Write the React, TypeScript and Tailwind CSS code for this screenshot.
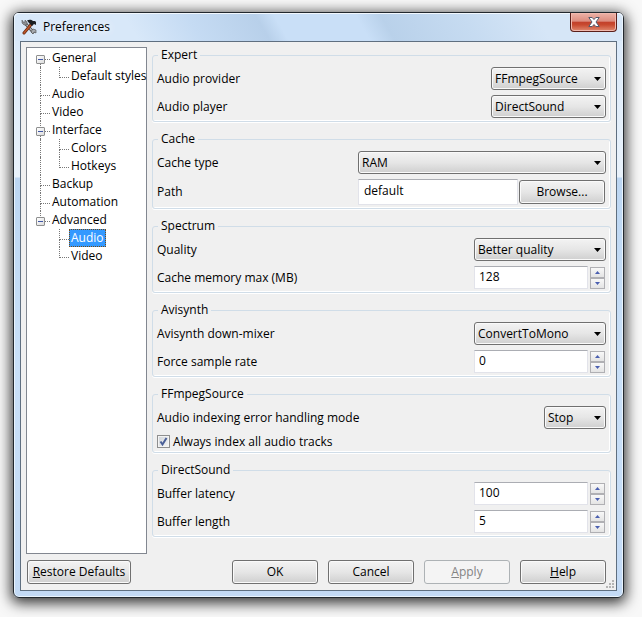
import React, { useState } from 'react';
import type { ReactNode } from 'react';

const tree = [
  { label: 'General', children: ['Default styles'] },
  { label: 'Audio', children: [] },
  { label: 'Video', children: [] },
  { label: 'Interface', children: ['Colors', 'Hotkeys'] },
  { label: 'Backup', children: [] },
  { label: 'Automation', children: [] },
  { label: 'Advanced', children: ['Audio', 'Video'] },
];

const face = 'bg-linear-to-b from-[#f3f3f3] from-0% via-[#e6e6e6] via-50% to-[#cfcfcf]';

// Dotted connector on the left of a tree label
function Branch({ up = true, down = true, toggle = false }: { up?: boolean; down?: boolean; toggle?: boolean }) {
  return (
    <span className="relative flex w-[10px] shrink-0 flex-col">
      <span className={`h-[11px] border-b border-dotted border-[#777] ${up ? 'border-l' : ''}`} />
      <span className={`h-[7px] border-dotted border-[#777] ${down ? 'border-l' : ''}`} />
      {toggle && (
        <span className="absolute top-[6px] -left-1 flex h-[9px] w-[9px] items-center justify-center rounded-[1px] border border-[#8e8f8f] bg-linear-to-br from-white to-[#dcdcdc]">
          <span className="h-px w-[5px] bg-[#3f56a6]" />
        </span>
      )}
    </span>
  );
}

function TreeLabel({ label, id, selected, onSelect }: { label: string; id: string; selected: string; onSelect: (id: string) => void }) {
  return (
    <button
      type="button"
      onClick={() => onSelect(id)}
      className={`h-[18px] px-px leading-4 whitespace-nowrap border ${
        selected === id ? 'border-dotted border-[#7a4a10] bg-[#3399ff] text-white' : 'border-transparent'
      }`}
    >
      {label}
    </button>
  );
}

function Tree() {
  const [selected, setSelected] = useState('Advanced/Audio');

  return (
    <nav className="w-[121px] shrink-0 border border-[#828790] bg-white py-px pl-[13px]">
      <ul>
        {tree.map((node, i) => {
          const last = i === tree.length - 1;
          return (
            <li key={node.label}>
              <div className="flex h-[18px]">
                <Branch up={i > 0} down={!last} toggle={node.children.length > 0} />
                <TreeLabel label={node.label} id={node.label} selected={selected} onSelect={setSelected} />
              </div>
              {node.children.map((child, j) => (
                <div key={child} className="flex h-[18px]">
                  <span className={`w-[19px] shrink-0 border-dotted border-[#777] ${last ? '' : 'border-l'}`} />
                  <Branch down={j < node.children.length - 1} />
                  <TreeLabel label={child} id={`${node.label}/${child}`} selected={selected} onSelect={setSelected} />
                </div>
              ))}
            </li>
          );
        })}
      </ul>
    </nav>
  );
}

function Group({ title, children }: { title: string; children: ReactNode }) {
  return (
    <fieldset className="min-w-0 rounded-[3px] border border-[#d0dde8] pr-1 pb-[3px] pl-1 shadow-[inset_-1px_-1px_0_#fff,0_1px_0_#fff]">
      <legend className="ml-px h-4 px-[3px] leading-4">{title}</legend>
      <div className="flex flex-col gap-[5px] pt-1">{children}</div>
    </fieldset>
  );
}

function Row({ label, id, children }: { label: string; id: string; children: ReactNode }) {
  return (
    <div className="flex items-center justify-between">
      <label htmlFor={id}>{label}</label>
      {children}
    </div>
  );
}

function Select({ id, value, width }: { id: string; value: string; width: string }) {
  return (
    <span className={`relative flex ${width}`}>
      <select
        id={id}
        defaultValue={value}
        className={`h-[23px] w-full appearance-none rounded-[3px] border border-[#707070] pl-[3px] shadow-[inset_0_0_0_1px_#fafafa] ${face}`}
      >
        <option>{value}</option>
      </select>
      <svg className="pointer-events-none absolute top-[10px] right-[5px]" width="7" height="4" viewBox="0 0 7 4">
        <path d="M0 0h7L3.500 4z" fill="#000" />
      </svg>
    </span>
  );
}

function Spin({ id, value }: { id: string; value: number }) {
  const [n, setN] = useState(value);
  const button =
    'flex h-[11px] w-[15px] items-center justify-center border border-[#b0b0b4] bg-linear-to-b from-[#f8f8f8] to-[#e4e4e4]';

  return (
    <span className="flex items-center gap-[2px]">
      <input
        id={id}
        value={n}
        onChange={(e) => setN(Number(e.target.value) || 0)}
        className="h-[23px] w-[114px] border border-[#e2e3ea] border-t-[#abadb3] bg-white pb-[2px] pl-1"
      />
      <span className="mr-px flex flex-col">
        <button type="button" aria-label="Increase" onClick={() => setN(n + 1)} className={button}>
          <svg width="5" height="3" viewBox="0 0 5 3"><path d="M0 3L2.500 0L5 3z" fill="#4a5fb0" /></svg>
        </button>
        <button type="button" aria-label="Decrease" onClick={() => setN(n - 1)} className={button}>
          <svg width="5" height="3" viewBox="0 0 5 3"><path d="M0 0h5L2.500 3z" fill="#4a5fb0" /></svg>
        </button>
      </span>
    </span>
  );
}

function Button({ children, className = 'w-[86px]', disabled = false }: { children: ReactNode; className?: string; disabled?: boolean }) {
  return (
    <button
      type="button"
      disabled={disabled}
      className={`h-6 rounded-[3px] border ${className} ${
        disabled ? 'border-[#adb2b5] bg-[#f4f4f4] text-[#838383]' : `border-[#707070] shadow-[inset_0_0_0_1px_#fafafa] ${face}`
      }`}
    >
      {children}
    </button>
  );
}

function TitleBar() {
  return (
    <header className="-mx-[6px] flex h-7 items-start justify-between rounded-t-[5px] bg-[linear-gradient(60deg,#d8e8f9_0%,#d8e8f9_20%,#c5dbf3_30%,#b8d0ea_41%,#c9dff7_44%,#c9dff7_57%,#b9d1ea_61%,#c6dbf1_74%,#d6e6f7_86%)] px-[6px] shadow-[inset_0_1px_0_#f2f8fe,inset_1px_0_0_#eaf4fd,inset_-1px_0_0_#eaf4fd]">
      <div className="flex h-7 items-center gap-[6px] pl-px">
        <svg width="16" height="16" viewBox="0 0 16 16">
          <path d="M4 4L13 14" stroke="#444" strokeWidth="3" />
          <path d="M4 4L13 14" stroke="#b9bcc0" strokeWidth="1.500" />
          <path d="M1 1v3l2 2h3V3L4 1v2H2z" fill="#8d9094" stroke="#444" strokeWidth=".5" />
          <path d="M11 11l1-1 3 1v3l-2-1-1 2-2-2z" fill="#a8abaf" stroke="#444" strokeWidth=".6" />
          <path d="M10.500 5L3 14" stroke="#6b2c10" strokeWidth="3" strokeLinecap="round" />
          <path d="M10.500 5L3 14" stroke="#c0562a" strokeWidth="1.400" strokeLinecap="round" />
          <path d="M6 1.500C8 .3 10.500.5 12 2h2l1 1v3l-2-1-2 2-3-3z" fill="#1c1f22" />
        </svg>
        <h1 className="[text-shadow:0_0_8px_#fff,0_0_12px_#fff]">Preferences</h1>
      </div>
      <button
        type="button"
        aria-label="Close"
        className="flex h-[19px] w-[47px] items-center justify-center rounded-b-[4px] border border-t-0 border-[#5a1f1a] bg-[linear-gradient(#eeb3a8_0%,#dc8c7e_46%,#c2402b_50%,#c8492f_65%,#e08a70_100%)] shadow-[inset_0_0_0_1px_#f0b9ae]"
      >
        <svg width="12" height="10" viewBox="0 0 12 10">
          <path d="M.8.5h3.400l1.800 2 1.800-2h3.400L8 5l3.200 4.500H7.800L6 7.500l-1.800 2H.8L4 5z" fill="#fff" stroke="#555a6b" />
        </svg>
      </button>
    </header>
  );
}

export default function App() {
  return (
    <div className="min-h-screen bg-[#f8f8f8] px-[13px] pt-3 pb-[19px] font-['Open_Sans',sans-serif] text-[12px] leading-4 text-black">
      <main className="mr-[5px] rounded-[6px] border border-[#22282e] bg-[linear-gradient(#d8e8f9_0px,#e9f2fb_164px,#bcd6f2_165px,#c9e0f8_60%,#c3daf5_100%)] px-[6px] pb-[6px] shadow-[0_3px_14px_2px_rgba(0,0,0,0.8),inset_0_0_0_1px_#eaf4fd]">
        <TitleBar />
        <div className="border border-[#5f6f80] bg-[#f0f0f0] px-[5px] pt-[5px] pb-[6px]">
          <div className="flex items-stretch gap-[5px]">
            <Tree />
            <div className="flex min-w-0 flex-1 flex-col gap-[9px] pb-[17px]">
              <Group title="Expert">
                <Row label="Audio provider" id="provider">
                  <Select id="provider" value="FFmpegSource" width="w-[115px]" />
                </Row>
                <Row label="Audio player" id="player">
                  <Select id="player" value="DirectSound" width="w-[115px]" />
                </Row>
              </Group>
              <Group title="Cache">
                <Row label="Cache type" id="cache-type">
                  <Select id="cache-type" value="RAM" width="w-[248px]" />
                </Row>
                <Row label="Path" id="path">
                  <span className="flex items-center gap-px pr-px">
                    <input id="path" defaultValue="default" className="h-[26px] w-[160px] border border-[#e2e3ea] border-t-[#abadb3] bg-white pb-1 pl-[5px]" />
                    <Button>Browse...</Button>
                  </span>
                </Row>
              </Group>
              <Group title="Spectrum">
                <Row label="Quality" id="quality">
                  <Select id="quality" value="Better quality" width="w-[132px]" />
                </Row>
                <Row label="Cache memory max (MB)" id="cache-memory">
                  <Spin id="cache-memory" value={128} />
                </Row>
              </Group>
              <Group title="Avisynth">
                <Row label="Avisynth down-mixer" id="down-mixer">
                  <Select id="down-mixer" value="ConvertToMono" width="w-[132px]" />
                </Row>
                <Row label="Force sample rate" id="sample-rate">
                  <Spin id="sample-rate" value={0} />
                </Row>
              </Group>
              <Group title="FFmpegSource">
                <Row label="Audio indexing error handling mode" id="error-mode">
                  <Select id="error-mode" value="Stop" width="w-[62px]" />
                </Row>
                <label className="flex h-[15px] items-center gap-[3px]">
                  <span className="relative flex">
                    <input
                      type="checkbox"
                      defaultChecked
                      className="peer h-[13px] w-[13px] appearance-none border border-[#8e8f8f] bg-linear-to-br from-[#cfd4d9] to-[#f6f6f6] shadow-[inset_0_0_0_1px_#f4f4f4]"
                    />
                    <svg className="pointer-events-none absolute inset-0 hidden peer-checked:block" width="13" height="13" viewBox="0 0 13 13">
                      <path d="M3.500 6.500L5.500 9.500L9.500 3" fill="none" stroke="#4a5f97" strokeWidth="2" />
                    </svg>
                  </span>
                  Always index all audio tracks
                </label>
              </Group>
              <Group title="DirectSound">
                <Row label="Buffer latency" id="latency">
                  <Spin id="latency" value={100} />
                </Row>
                <Row label="Buffer length" id="length">
                  <Spin id="length" value={5} />
                </Row>
              </Group>
            </div>
          </div>
          <footer className="relative flex items-center justify-between pt-[6px] pr-[5px] pl-px">
            <Button className="w-[104px]"><u>R</u>estore Defaults</Button>
            <div className="flex gap-[10px]">
              <Button>OK</Button>
              <Button>Cancel</Button>
              <Button disabled><u>A</u>pply</Button>
              <Button><u>H</u>elp</Button>
            </div>
            <svg className="absolute -right-[3px] -bottom-1" width="8" height="8" viewBox="0 0 8 8" fill="#b4b4b4">
              <path d="M6 0h2v2H6zM3 3h2v2H3zM6 3h2v2H6zM0 6h2v2H0zM3 6h2v2H3zM6 6h2v2H6z" />
            </svg>
          </footer>
        </div>
      </main>
    </div>
  );
}
